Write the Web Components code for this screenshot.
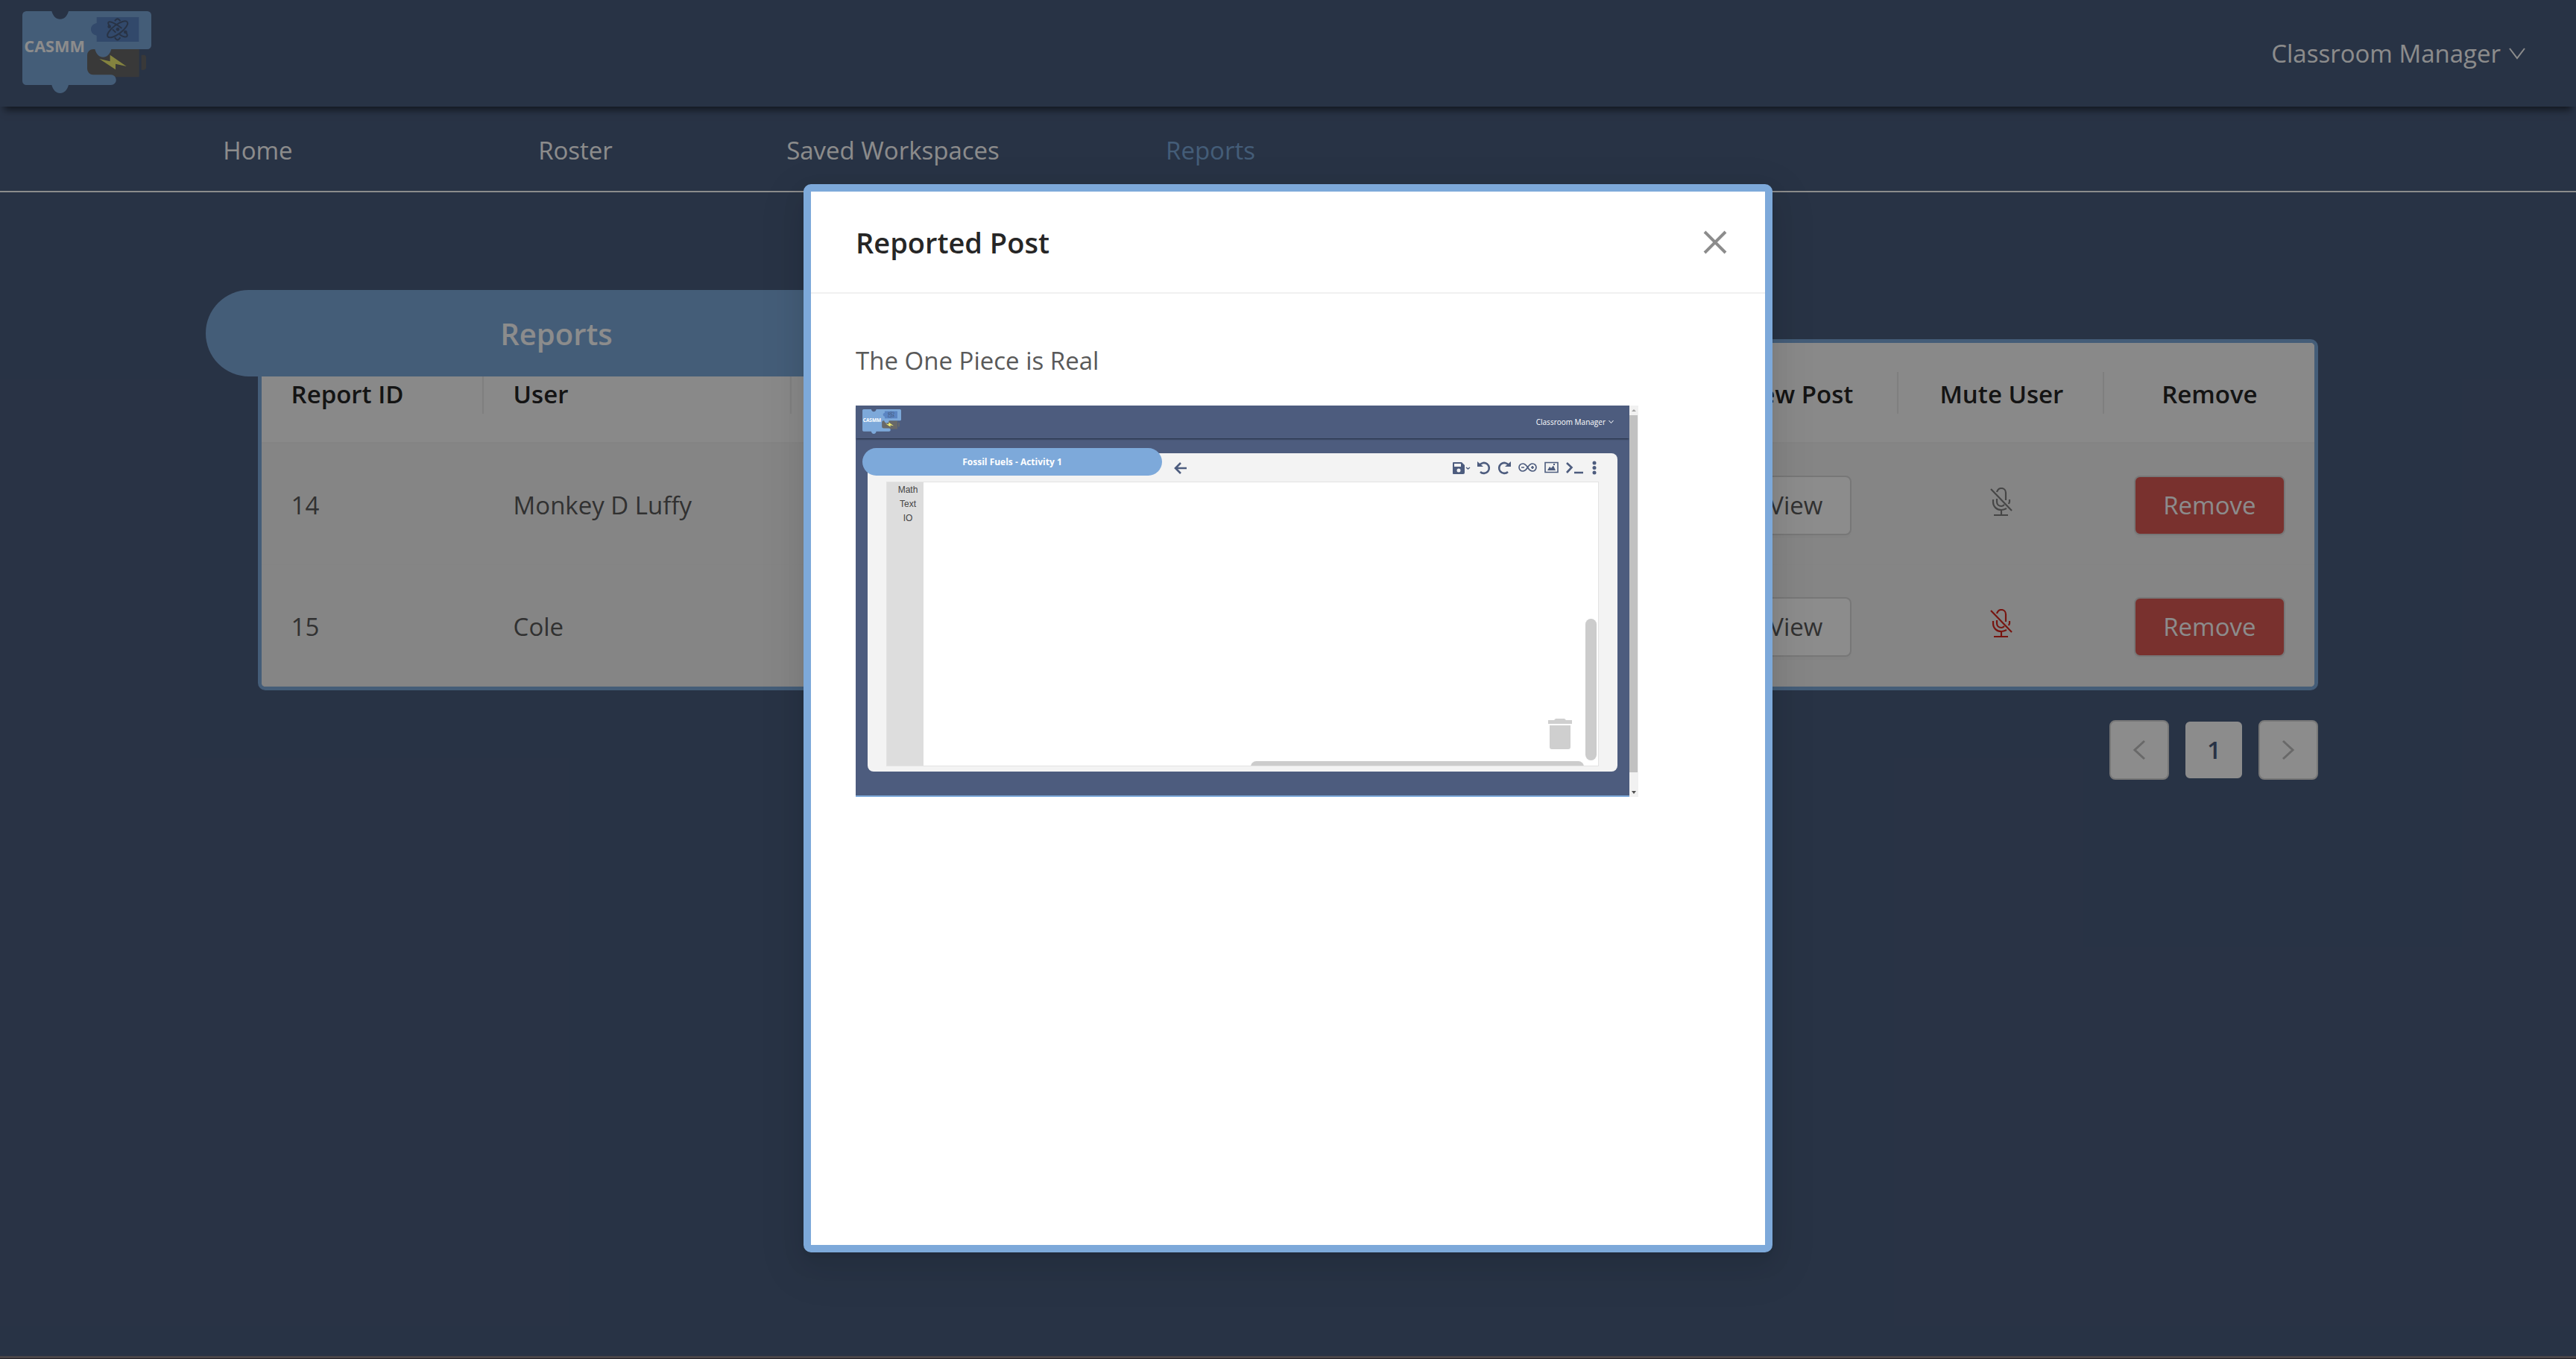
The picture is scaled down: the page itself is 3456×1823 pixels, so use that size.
<!DOCTYPE html>
<html lang="en">
<head>
<meta charset="utf-8">
<title>CASMM - Reports</title>
<style>
  :root {
    --navy: #4a5d7e;
    --blue: #7da9da;
    --line: #d9d9d9;
    --ink: #595959;
  }
  body {
    margin: 0;
    font-family: "Open Sans", "Noto Sans", sans-serif;
    font-size: 33px;
    line-height: 48px;
    color: var(--ink);
    background: var(--navy);
  }
</style>
</head>
<body>
<reports-page></reports-page>

<script>
const define = (name, html) => {
  const tpl = document.createElement('template');
  tpl.innerHTML = html;
  customElements.define(name, class extends HTMLElement {
    constructor() {
      super();
      this.attachShadow({ mode: 'open' }).append(tpl.content.cloneNode(true));
    }
  });
};

define('casmm-logo', `
<style>
  :host { display: block; }
  svg { display: block; width: 100%; height: 100%; }
  text { font: 700 65px "Open Sans", sans-serif; fill: #fff; }
</style>
<svg viewBox="90 45 519 330" role="img" aria-label="CASMM">
  <path fill="#686868" d="M351 198H560V310H351z"/>
  <path fill="#686868" d="M569 221H578a10 10 0 0 1 10 10V271a10 10 0 0 1-10 10H569z"/>
  <path fill="#7da9da" d="M106 45H208C214 66 226 77 242 77S270 66 276 45H593a16 16 0 0 1 16 16V182a16 16 0 0 1-16 16H448C442 220 430 230 415 230S388 220 382 198H375a24 24 0 0 0-24 24V277a24 24 0 0 0 24 24H447a20 20 0 0 1 0 41H276C270 363 258 375 242 375S214 363 208 342H106a16 16 0 0 1-16-16V61a16 16 0 0 1 16-16z"/>
  <path fill="#5b85c3" d="M389 69H559V168H389V143C374 140 366 130 366 118S374 96 389 93z"/>
  <path fill="#f0ee73" d="M443 221L509 267L465 257V280L400 237L443 247z"/>
  <g fill="none" stroke="#4a5d7e" stroke-width="6">
    <ellipse cx="473" cy="118" rx="49" ry="18" transform="rotate(-37 473 118)"/>
    <path d="M441 107C436 96 432 90 440 88C450 86 478 104 490 114M453 118L466 131M481 138C494 148 506 150 511 146C514 142 510 134 505 128"/>
    <path d="M462 85Q473 66 484 85M462 151Q473 170 484 151"/>
  </g>
  <g fill="#4a5d7e"><circle cx="474" cy="118" r="7"/><circle cx="440" cy="107" r="7"/><circle cx="505" cy="129" r="7"/></g>
  <text x="97" y="210">CASMM</text>
</svg>`);

define('top-bar', `
<style>
  :host { display: block; position: relative; background: var(--navy); box-shadow: 0 10px 10px -6px rgba(0,0,0,.6); }
  header { display: flex; align-items: flex-start; justify-content: space-between; height: 128px; padding: 15px 67px 0 30px; }
  casmm-logo { width: 173px; height: 110px; }
  button { display: flex; align-items: center; gap: 10px; height: 58px; margin: 28px 0 0; padding: 0; border: 0; background: none; color: #fff; font: inherit; }
  svg { width: 24px; height: 18px; }
</style>
<header>
  <casmm-logo></casmm-logo>
  <button type="button">Classroom Manager
    <svg viewBox="0 0 24 18" fill="none" stroke="#fff" stroke-width="2"><path d="M2 2L12 15L22 2"/></svg>
  </button>
</header>`);

define('main-nav', `
<style>
  :host { display: block; border-bottom: 2px solid #fff; }
  ul { display: flex; margin: 0; padding: 35px 133px 30px; list-style: none; }
  li { flex: 0 0 426px; text-align: center; }
  a { color: #fff; text-decoration: none; }
  a[aria-current] { color: var(--blue); }
</style>
<nav><ul>
  <li><a href="#home">Home</a></li>
  <li><a href="#roster">Roster</a></li>
  <li><a href="#workspaces">Saved Workspaces</a></li>
  <li><a href="#reports" aria-current="page">Reports</a></li>
</ul></nav>`);

define('app-button', `
<style>
  :host { display: inline-block; vertical-align: middle; }
  button { height: 80px; padding: 0 37px; border: 2px solid var(--line); border-radius: 8px; background: #fff; color: var(--ink); font: inherit; box-shadow: 0 4px 0 rgba(0,0,0,.016); display: block; }
  :host([danger]) button { background: #dc5954; color: #fff; }
</style>
<button type="button"><slot></slot></button>`);

define('mute-button', `
<style>
  :host { display: inline-block; color: #808080; vertical-align: middle; }
  :host([muted]) { color: #d9261c; }
  button { display: block; padding: 0; border: 0; background: none; color: inherit; }
  svg { display: block; width: 30px; height: 38px; margin-bottom: 12px; }
</style>
<button type="button" aria-label="Mute user">
  <svg viewBox="0 0 30 38" fill="none" stroke="currentColor" stroke-width="2.200">
    <path d="M1 2L29 31M9 6C10 3 12 1 15 1C19 1 21 4 21 7V17M9 15V19C9 23 12 25 15 25C17 25 18 24 19 23M4 16V19C4 26 9 30 15 30C18 30 20 29 22 28M26 16V19L25 22M15 30V37M5 37H24"/>
  </svg>
</button>`);

define('report-table', `
<style>
  :host { display: block; border: 5px solid var(--blue); border-radius: 10px; background: #fafafa; overflow: hidden; }
  table { width: 100%; border-collapse: separate; border-spacing: 0; table-layout: fixed; }
  th, td { padding: 4px 40px 0; text-align: left; box-sizing: border-box; white-space: nowrap; }
  th { height: 135px; color: #262626; font-weight: 600; border-bottom: 2px solid #f0f0f0; background: linear-gradient(#e8e8e8, #e8e8e8) right 39px / 2px 56px no-repeat #fafafa; }
  th:last-child { background: #fafafa; }
  td { height: 163px; background: #f3f3f3; border-bottom: 2px solid #f0f0f0; }
  .c { text-align: center; padding: 4px 0 0; }
</style>
<table>
  <colgroup><col style="width:298px"><col style="width:413px"><col><col style="width:276px"><col style="width:276px"><col style="width:282px"></colgroup>
  <thead><tr><th>Report ID</th><th>User</th><th></th><th class="c">View Post</th><th class="c">Mute User</th><th class="c">Remove</th></tr></thead>
  <tbody>
    <tr><td>14</td><td>Monkey D Luffy</td><td></td><td class="c"><app-button>View</app-button></td><td class="c"><mute-button></mute-button></td><td class="c"><app-button danger>Remove</app-button></td></tr>
    <tr><td>15</td><td>Cole</td><td></td><td class="c"><app-button>View</app-button></td><td class="c"><mute-button muted></mute-button></td><td class="c"><app-button danger>Remove</app-button></td></tr>
  </tbody>
</table>`);

define('page-switch', `
<style>
  :host { display: flex; justify-content: flex-end; gap: 20px; padding-top: 40px; }
  button { width: 80px; height: 80px; padding: 0; border: 2px solid var(--line); border-radius: 8px; background: #fff; color: var(--navy); font: inherit; font-weight: 600; display: grid; place-items: center; }
  button[aria-current] { border-color: var(--navy); }
  svg { width: 18px; height: 28px; }
</style>
<button type="button" aria-label="Previous page" disabled><svg viewBox="0 0 18 28" fill="none" stroke="#bfbfbf" stroke-width="3"><path d="M16 2L3 14L16 26"/></svg></button>
<button type="button" aria-current="page">1</button>
<button type="button" aria-label="Next page" disabled><svg viewBox="0 0 18 28" fill="none" stroke="#bfbfbf" stroke-width="3"><path d="M2 2L15 14L2 26"/></svg></button>`);

define('workspace-preview', `
<style>
  :host { display: flex; width: 1050px; height: 525px; color: #fff; font-size: 10px; line-height: 16px; }
  .app { flex: 1; display: flex; flex-direction: column; background: #4d5c7e; border-bottom: 2px solid var(--blue); box-sizing: border-box; }
  .head { display: flex; justify-content: space-between; align-items: flex-start; height: 39px; padding: 5px 21px 0 9px; box-shadow: 0 2px 2px -1px #202a3c; }
  casmm-logo { width: 52px; height: 33px; }
  .who { display: flex; align-items: center; gap: 4px; padding-top: 9px; }
  .who svg { width: 7px; height: 6px; }
  .title { z-index: 1; box-sizing: border-box; width: 402px; height: 37px; margin: 13px 0 0 9px; border-radius: 19px; background: var(--blue); font-size: 12px; font-weight: 700; line-height: 37px; text-align: center; }
  .panel { flex: 1; display: flex; flex-direction: column; box-sizing: border-box; margin: -30px 16px 32px; padding: 0 25px 7px; border-radius: 8px; background: #f3f3f3; }
  .tools { display: flex; align-items: center; justify-content: space-between; height: 38px; padding: 0 0 0 385px; color: #4d5c7e; }
  .tools svg { display: block; height: 20px; }
  .set { display: flex; align-items: center; gap: 9px; }
  .work { flex: 1; position: relative; display: flex; box-sizing: border-box; border: 1px solid #e3e3e3; background: #fff; overflow: hidden; }
  .box { width: 49px; box-sizing: border-box; padding: 1px 0 0 7px; background: #ddd; color: #444; font: 12px/19px "Liberation Sans", Arial, sans-serif; text-align: center; }
  .v { position: absolute; right: 2px; bottom: 7px; width: 15px; height: 190px; border-radius: 8px; background: #ccc; }
  .h { position: absolute; right: 19px; bottom: -9px; width: 447px; height: 15px; border-radius: 8px; background: #ccc; }
  .bin { position: absolute; right: 35px; bottom: 21px; width: 32px; height: 42px; }
  .bar { display: flex; flex-direction: column; width: 12px; background: #f1f1f1; }
  .bar svg { width: 12px; height: 13px; }
  .thumb { width: 11px; height: 479px; margin-bottom: 20px; background: #c1c1c1; }
</style>
<div class="app">
  <div class="head"><casmm-logo></casmm-logo>
    <div class="who">Classroom Manager<svg viewBox="0 0 7 6" fill="none" stroke="#fff"><path d="M.5 1L3.500 4.500L6.500 1"/></svg></div></div>
  <div class="title">Fossil Fuels - Activity 1</div>
  <div class="panel">
    <div class="tools">
      <svg width="18" viewBox="0 0 18 20" fill="none" stroke="currentColor" stroke-width="2.600"><path d="M10 4L3 11L10 18M3 11H18"/></svg>
      <div class="set">
        <svg width="25" viewBox="0 0 25 20"><path fill="currentColor" fill-rule="evenodd" d="M2 3H13L17 7V17Q17 19 15 19H2Q1 19 1 18V4Q1 3 2 3zM3 5V9H12V5zM9 11.500a2.500 2.500 0 1 0 0 5a2.500 2.500 0 1 0 0-5z"/><path fill="none" stroke="currentColor" stroke-width="1.500" d="M19 10L21.500 12L24 10"/></svg>
        <svg width="18" viewBox="0 0 18 20" fill="none" stroke="currentColor" stroke-width="2.600"><path d="M4 16A7 7 0 1 0 3 7"/><path stroke="none" fill="currentColor" d="M0 2V9H8z"/></svg>
        <svg width="18" viewBox="0 0 18 20" fill="none" stroke="currentColor" stroke-width="2.600"><path d="M14 16A7 7 0 1 1 15 7"/><path stroke="none" fill="currentColor" d="M18 2V9H10z"/></svg>
        <svg width="27" viewBox="0 0 27 20" fill="none" stroke="currentColor" stroke-width="1.700"><path d="M13.500 10C11 6 9 5 7 5a5 5 0 0 0 0 10C9 15 11 14 13.500 10S18 5 20 5a5 5 0 0 1 0 10C18 15 16 14 13.500 10zM5 10H9M18 10H22M20 8V12"/></svg>
        <svg width="19" viewBox="0 0 19 20"><path fill="none" stroke="currentColor" stroke-width="1.600" d="M1 3.500H18V16.500H1z"/><path fill="currentColor" d="M4 14L7 9L9 11L12 7.500L15 14zM12 5H14V7H12z"/></svg>
        <svg width="24" viewBox="0 0 24 20" fill="none" stroke="currentColor" stroke-width="2.600"><path d="M2 4L8.500 10L2 17M12 17H24"/></svg>
        <svg width="12" viewBox="0 0 12 20" fill="currentColor"><circle cx="6" cy="4" r="2.500"/><circle cx="6" cy="10.500" r="2.500"/><circle cx="6" cy="17" r="2.500"/></svg>
      </div>
    </div>
    <div class="work">
      <div class="box"><div>Math</div><div>Text</div><div>IO</div></div>
      <div class="v"></div><div class="h"></div>
      <svg class="bin" viewBox="0 0 32 42" fill="#cfcfcf"><path d="M0 2H8L10 0H22L24 2H32V7H0zM2 9H30V38Q30 41 27 41H5Q2 41 2 38z"/></svg>
    </div>
  </div>
</div>
<div class="bar">
  <svg viewBox="0 0 12 13"><path fill="#a3a3a3" d="M6 5L9 8H3z"/></svg>
  <div class="thumb"></div>
  <svg viewBox="0 0 12 13"><path fill="#505050" d="M6 9L9 5H3z"/></svg>
</div>`);

define('modal-dialog', `
<style>
  :host { position: absolute; inset: 0; display: flex; justify-content: center; align-items: flex-start; background: rgba(0,0,0,.45); z-index: 5; }
  section { box-sizing: border-box; width: 1300px; margin-top: 247px; border: 10px solid var(--blue); border-radius: 10px; background: var(--blue); box-shadow: 0 6px 12px -8px rgba(0,0,0,.12), 0 12px 32px rgba(0,0,0,.08), 0 18px 56px 16px rgba(0,0,0,.05); }
  header { display: flex; align-items: center; justify-content: space-between; height: 135px; padding: 0 50px 0 60px; border-bottom: 2px solid #f0f0f0; background: #fff; }
  h2 { margin: 0; font-size: 38px; font-weight: 600; line-height: 52px; color: #262626; }
  button { padding: 0; border: 0; background: none; display: block; }
  button svg { display: block; width: 34px; height: 34px; }
  .body { box-sizing: border-box; height: 70vh; padding: 66px 60px; background: #fff; }
</style>
<section role="dialog" aria-labelledby="t">
  <header><h2 id="t"><slot name="title"></slot></h2>
    <button type="button" aria-label="Close"><svg viewBox="0 0 34 34" stroke="#8c8c8c" stroke-width="4"><path d="M3 3L31 31M31 3L3 31"/></svg></button></header>
  <div class="body"><slot></slot></div>
</section>`);

define('reports-page', `
<style>
  :host { display: flex; flex-direction: column; position: relative; min-height: 100vh; }
  main { flex: 1; padding-top: 131px; }
  h1 { position: relative; z-index: 1; box-sizing: border-box; width: 27.2%; height: 116px; margin: 0 0 -50px 8%; border-radius: 58px; background: var(--blue); color: #fff; font-size: 40px; font-weight: 600; line-height: 118px; text-align: center; }
  .list { width: 80%; margin: 0 auto; }
  p { margin: 0 0 36px; }
  .edge { position: relative; z-index: 6; height: 1px; background: #232026; border-top: 3px solid #4b4648; }
</style>
<top-bar></top-bar>
<main-nav></main-nav>
<main>
  <h1>Reports</h1>
  <div class="list"><report-table></report-table><page-switch></page-switch></div>
</main>
<div class="edge"></div>
<modal-dialog>
  <span slot="title">Reported Post</span>
  <p>The One Piece is Real</p>
  <workspace-preview></workspace-preview>
</modal-dialog>`);
</script>
</body>
</html>
